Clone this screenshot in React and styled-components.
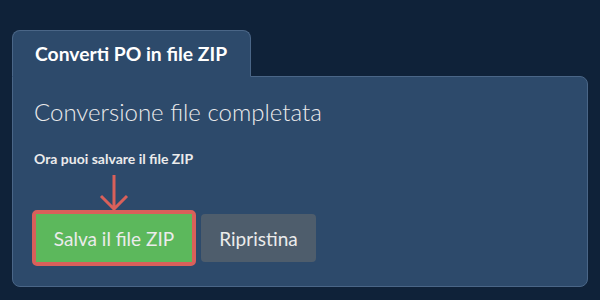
import React from 'react';
import styled, { createGlobalStyle } from 'styled-components';

const GlobalStyle = createGlobalStyle`
  html, body {
    margin: 0;
    padding: 0;
    background: #0f2239;
  }
  body {
    font-family: Lato, "Noto Sans", sans-serif;
    color: #ebebeb;
  }
`;

const Page = styled.div`
  width: 600px;
  height: 300px;
  box-sizing: border-box;
  padding: 30px 12px 0 12px;
`;

const TabBar = styled.div`
  display: flex;
  position: relative;
  z-index: 1;
  margin-bottom: -1px;
`;

const Tab = styled.div`
  box-sizing: border-box;
  width: 239px;
  height: 47px;
  padding: 0 0 0 22px;
  display: flex;
  align-items: center;
  background: #2d4a6b;
  border: 1px solid #4a6687;
  border-bottom-color: #2d4a6b;
  border-radius: 8px 8px 0 0;
  font-size: 19.3px;
  font-weight: 700;
  color: #ffffff;
`;

const Panel = styled.div`
  box-sizing: border-box;
  height: 211px;
  background: #2d4a6b;
  border: 1px solid #4a6687;
  border-radius: 0 8px 8px 8px;
  padding: 20px 21px;
`;

const Heading = styled.h2`
  margin: 0;
  font-size: 24px;
  font-weight: 300;
  line-height: 30px;
  color: #ebebeb;
`;

const Note = styled.p`
  margin: 22px 0 0;
  font-size: 14px;
  font-weight: 700;
  line-height: 20px;
  color: #ebebeb;
`;

const Actions = styled.div`
  display: flex;
  align-items: center;
  gap: 5px;
  margin: 41px 0 0 -2px;
`;

const Highlight = styled.span`
  position: relative;
  display: inline-flex;
  border: 4px solid #d9605a;
  border-radius: 5px;
`;

const Arrow = styled.svg`
  position: absolute;
  left: 50%;
  bottom: 100%;
  transform: translateX(-50%);
  margin-bottom: 3px;
`;

const Button = styled.button`
  box-sizing: border-box;
  width: ${(p) => (p.$primary ? '156px' : '115px')};
  height: 48px;
  padding: 0;
  border: none;
  border-radius: ${(p) => (p.$primary ? '0' : '4px')};
  background: ${(p) => (p.$primary ? '#5cb85c' : '#4e5d6c')};
  color: #ebebeb;
  font-family: Lato, "Noto Sans", sans-serif;
  font-size: 19px;
  font-weight: 400;
  text-align: center;
  cursor: pointer;
`;

const App = () => {
  return (
    <Page>
      <GlobalStyle />
      <TabBar>
        <Tab>Converti PO in file ZIP</Tab>
      </TabBar>
      <Panel>
        <Heading>Conversione file completata</Heading>
        <Note>Ora puoi salvare il file ZIP</Note>
        <Actions>
          <Highlight>
            <Arrow width="30" height="36" viewBox="0 0 30 36">
              <path
                d="M15 0 V34 M2 21 L15 34 L28 21"
                fill="none"
                stroke="#d9605a"
                strokeWidth="3"
              />
            </Arrow>
            <Button $primary>Salva il file ZIP</Button>
          </Highlight>
          <Button>Ripristina</Button>
        </Actions>
      </Panel>
    </Page>
  );
};

export default App;
